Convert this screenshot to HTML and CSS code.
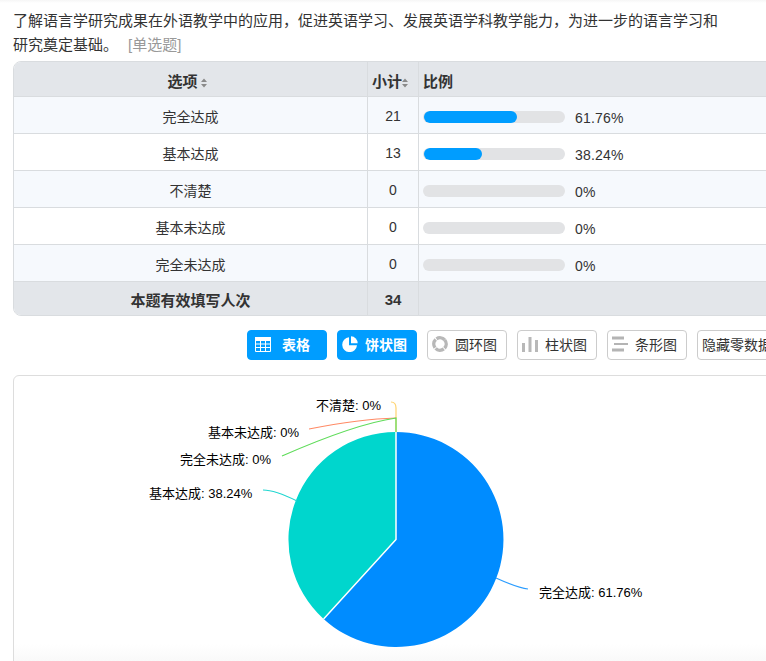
FILE: index.html
```html
<!DOCTYPE html>
<html lang="zh-CN">
<head>
<meta charset="utf-8">
<title>单选题统计</title>
<link rel="stylesheet" href="styles.css">
</head>
<body>
<main class="page">
  <p class="question">了解语言学研究成果在外语教学中的应用<span class="tc">，</span>促进英语学习、发展英语学科教学能力<span class="tc">，</span>为进一步的语言学习和<br>研究奠定基础。<span class="qtype">[单选题]</span></p>

  <div class="table-wrap">
    <table class="stats">
      <colgroup><col class="col-a"><col class="col-b"><col class="col-c"></colgroup>
      <thead>
        <tr>
          <th class="first">选项<svg class="sort" viewBox="0 0 6 10"><path d="M3 0.500 6 4H0zM3 9.500 0 6h6z"/></svg></th>
          <th class="tight">小计<svg class="sort" viewBox="0 0 6 10"><path d="M3 0.500 6 4H0zM3 9.500 0 6h6z"/></svg></th>
          <th class="left">比例</th>
        </tr>
      </thead>
      <tbody>
        <tr class="odd"><td>完全达成</td><td>21</td><td class="left"><div class="ratio"><span class="track"><span class="fill" style="width:65.5%"></span></span><span class="pct">61.76%</span></div></td></tr>
        <tr><td>基本达成</td><td>13</td><td class="left"><div class="ratio"><span class="track"><span class="fill" style="width:41%"></span></span><span class="pct">38.24%</span></div></td></tr>
        <tr class="odd"><td>不清楚</td><td>0</td><td class="left"><div class="ratio"><span class="track"></span><span class="pct">0%</span></div></td></tr>
        <tr><td>基本未达成</td><td>0</td><td class="left"><div class="ratio"><span class="track"></span><span class="pct">0%</span></div></td></tr>
        <tr class="odd"><td>完全未达成</td><td>0</td><td class="left"><div class="ratio"><span class="track"></span><span class="pct">0%</span></div></td></tr>
      </tbody>
      <tfoot>
        <tr><td>本题有效填写人次</td><td>34</td><td></td></tr>
      </tfoot>
    </table>
  </div>

  <div class="toolbar">
    <button class="btn on wide">
      <svg class="ico" viewBox="0 0 16 16"><path fill="#fff" d="M0 1h16v4H0z"/><path fill="none" stroke="#fff" d="M.5 1v14.500h15V1M.5 8h15M.5 11.500h15M5.500 4v11.500M10.500 4v11.500"/></svg>表格
    </button>
    <button class="btn on">
      <svg class="ico" viewBox="0 0 16 16"><path fill="#fff" d="M7 1.300A7.400 7.400 0 1 0 15 9.300H7z"/><path fill="#fff" d="M9 0.300A7 7 0 0 1 15.700 7.300H9z"/></svg>饼状图
    </button>
    <button class="btn">
      <svg class="ico" viewBox="0 0 16 16"><circle cx="8" cy="8" r="6.200" fill="none" stroke="#b8b8b8" stroke-width="3.400" stroke-dasharray="8.700 1 8.700 1 8.700 1 8.700 1" transform="rotate(-40 8 8)"/></svg>圆环图
    </button>
    <button class="btn">
      <svg class="ico" viewBox="0 0 16 16"><path fill="#b8b8b8" d="M0 7h3v9H0zM6.500 1h3v15h-3zM13 4h3v12h-3z"/></svg>柱状图
    </button>
    <button class="btn">
      <svg class="ico" viewBox="0 0 16 16"><path fill="#b4b4b4" d="M0 .5h12v3H0zM2 7h14v2H2zM0 12.500h12v3H0z"/></svg>条形图
    </button>
    <button class="btn text-only">隐藏零数据</button>
  </div>

  <section class="chart">
    <svg class="pie" viewBox="14 376 752 300">
      <path class="slice-a" d="M396 539.500V432A107.500 107.500 0 1 1 323.600 619Z"/>
      <path class="slice-b" d="M396 539.500L323.600 619A107.500 107.500 0 0 1 396 432Z"/>
      <path class="divider" d="M396 432V539.500L323.600 619"/>
      <path class="lead" stroke="#ffd36e" d="M391 402Q396 402 396 408V432"/>
      <path class="lead" stroke="#ff8a65" d="M309 429Q360 419 396 418"/>
      <path class="lead" stroke="#5fdc5a" d="M282 456Q355 424 396 418V432"/>
      <path class="lead" stroke="#20d6d0" d="M263 490Q275 490 297 501"/>
      <path class="lead" stroke="#2b9dff" d="M496 578Q518 588 528 589"/>
      <text class="lbl" x="316" y="410">不清楚: 0%</text>
      <text class="lbl" x="208" y="437">基本未达成: 0%</text>
      <text class="lbl" x="180" y="464">完全未达成: 0%</text>
      <text class="lbl" x="149" y="498">基本达成: 38.24%</text>
      <text class="lbl" x="539" y="597">完全达成: 61.76%</text>
    </svg>
  </section>
</main>
</body>
</html>
```

FILE: styles.css
```css
* { box-sizing: border-box; }
html, body {
  margin: 0;
  height: 661px;
  width: 766px;
  overflow: hidden;
  background: linear-gradient(to bottom, #f6f6f6 0, #fff 3px);
  color: #333;
  font-family: "Liberation Sans", "Noto Sans CJK SC", sans-serif;
}
.page { width: 820px; padding: 8px 0 0 13px; }
.question { margin: 0; width: 753px; height: 48px; font-size: 15px; line-height: 24px; color: #333; }
.tc { font-family: "Noto Sans CJK TC", sans-serif; }
.qtype { margin-left: 10px; font-size: 15px; color: #999; }

.table-wrap {
  margin-top: 5px;
  width: 800px;
  border: 1px solid #d9dcdf;
  border-radius: 8px;
  overflow: hidden;
}
.stats { width: 100%; table-layout: fixed; border-collapse: separate; border-spacing: 0; font-size: 14px; }
.col-a { width: 354px; }
.col-b { width: 51px; }
.stats th, .stats td {
  padding: 2px 0 0;
  text-align: center;
  border-right: 1px solid #d9dcdf;
  border-bottom: 1px solid #d9dcdf;
}
.stats th:last-child, .stats td:last-child { border-right: 0; }
.stats thead tr { height: 35px; background: #e3e6ea; }
.stats th { font-size: 15px; font-weight: 700; }
.stats th.first { padding-right: 7px; }
.stats th.tight { padding-right: 6px; white-space: nowrap; }
.stats tbody tr { height: 37px; }
.stats tr.odd { background: #f6f9fd; }
.stats tfoot tr { height: 33px; background: #e3e6ea; font-size: 15px; font-weight: 700; }
.stats tfoot td { border-bottom: 0; }
.stats .left { text-align: left; padding-left: 4px; }
.stats tbody .left { padding-top: 0; }
.sort { width: 6px; height: 10px; margin-left: 3px; fill: #8a8a8a; vertical-align: -1px; }
.tight .sort { margin-left: 0; }

.ratio { display: flex; align-items: center; gap: 10px; padding-top: 3px; }
.track { display: block; width: 142px; height: 12px; border-radius: 6px; background: #e2e3e5; overflow: hidden; }
.fill { display: block; height: 100%; margin-left: 1px; border-radius: 6px; background: #009dff; }
.pct { position: relative; top: 1px; font-size: 14px; letter-spacing: .2px; }

.toolbar { display: flex; gap: 10px; margin-top: 14px; padding-left: 234px; }
.btn {
  flex: none;
  display: flex;
  align-items: center;
  gap: 7px;
  width: 80px;
  height: 30px;
  padding: 0 0 2px 4px;
  border: 1px solid #ccc;
  border-radius: 4px;
  background: #fff;
  color: #333;
  font: 14px "Liberation Sans", "Noto Sans CJK SC", sans-serif;
  white-space: nowrap;
}
.btn.on { border-color: #009dff; background: #009dff; color: #fff; font-weight: 700; }
.btn.wide { gap: 11px; padding-left: 7px; }
.btn.text-only { padding-left: 4px; }
.ico { flex: none; width: 16px; height: 16px; }

.chart {
  margin-top: 15px;
  width: 800px;
  height: 300px;
  border: 1px solid #ddd;
  border-radius: 6px;
  background: linear-gradient(to bottom, #fff 268px, #f9f9f9 285px);
  overflow: hidden;
}
.pie { display: block; width: 752px; height: 300px; }
.slice-a { fill: #008cff; }
.slice-b { fill: #00d6cd; }
.divider { fill: none; stroke: #fff; stroke-width: 1.500; }
.lead { fill: none; stroke-width: 1.200; }
.lbl { font-size: 13px; fill: #000; font-family: "Liberation Sans", "Noto Sans CJK SC", sans-serif; }
```
